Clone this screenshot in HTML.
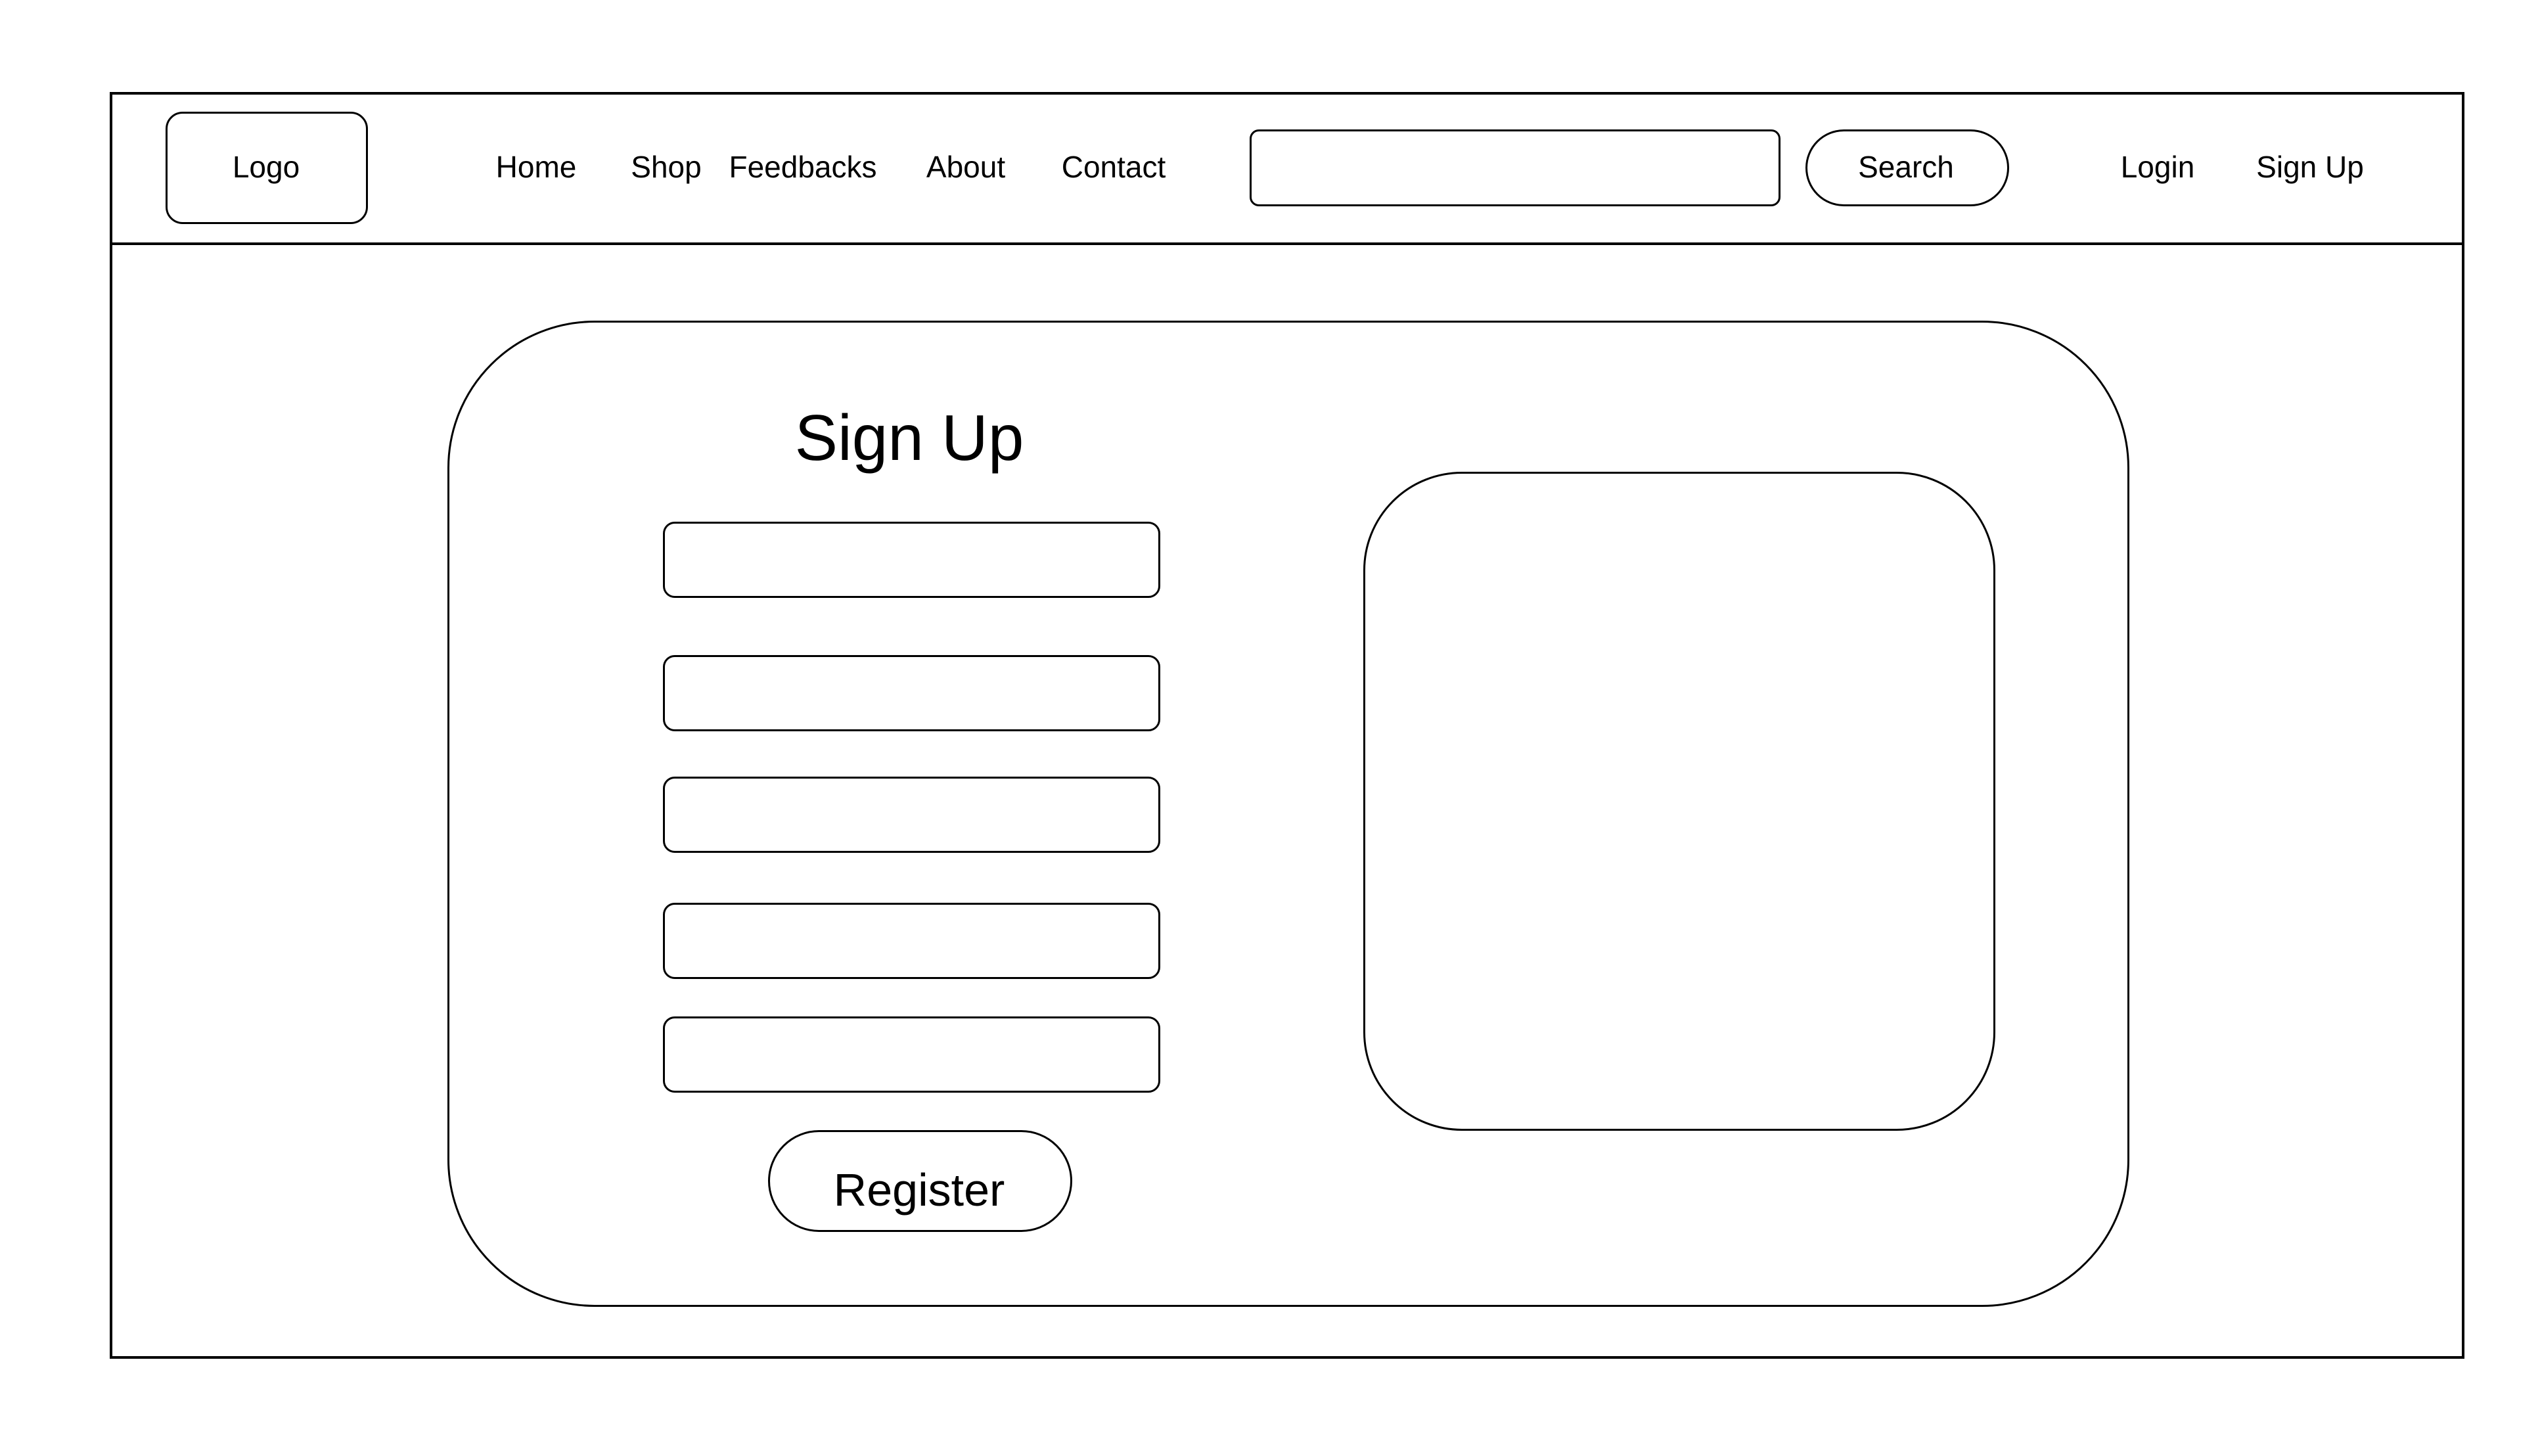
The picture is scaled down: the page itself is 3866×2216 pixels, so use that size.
<!DOCTYPE html>
<html><head><meta charset="utf-8"><style>
html,body{margin:0;padding:0;background:#fff;}
body{width:3866px;height:2216px;position:relative;overflow:hidden;font-family:"Liberation Sans",Arial,sans-serif;color:#000;}
.b{position:absolute;box-sizing:border-box;border:3.5px solid #000;background:#fff;}
.t{position:absolute;transform:translate(-50%,-50%);white-space:nowrap;font-size:46px;line-height:1;}
</style></head><body>
<div class="b" style="left:167px;top:140px;width:3584px;height:1928px;border-width:4px"></div>
<div style="position:absolute;left:167px;top:369px;width:3584px;height:4px;background:#000"></div>
<div class="b" style="left:252px;top:170px;width:308px;height:171px;border-radius:26px"></div>
<div class="t" style="left:405px;top:254px">Logo</div>
<div class="t" style="left:816px;top:254px">Home</div>
<div class="t" style="left:1014px;top:254px">Shop</div>
<div class="t" style="left:1222px;top:254px">Feedbacks</div>
<div class="t" style="left:1470px;top:254px">About</div>
<div class="t" style="left:1695px;top:254px">Contact</div>
<div class="b" style="left:1902px;top:197px;width:808px;height:117px;border-radius:14px"></div>
<div class="b" style="left:2748px;top:197px;width:310px;height:117px;border-radius:59px"></div>
<div class="t" style="left:2901px;top:254px">Search</div>
<div class="t" style="left:3284px;top:254px">Login</div>
<div class="t" style="left:3516px;top:254px">Sign Up</div>

<div class="b" style="left:681px;top:488px;width:2560px;height:1501px;border-radius:224px"></div>
<div class="t" style="left:1384px;top:666px;font-size:98px">Sign Up</div>
<div class="b" style="left:1009px;top:794px;width:757px;height:116px;border-radius:18px"></div>
<div class="b" style="left:1009px;top:997px;width:757px;height:116px;border-radius:18px"></div>
<div class="b" style="left:1009px;top:1182px;width:757px;height:116px;border-radius:18px"></div>
<div class="b" style="left:1009px;top:1374px;width:757px;height:116px;border-radius:18px"></div>
<div class="b" style="left:1009px;top:1547px;width:757px;height:116px;border-radius:18px"></div>
<div class="b" style="left:1169px;top:1720px;width:463px;height:155px;border-radius:78px"></div>
<div class="t" style="left:1399px;top:1811px;font-size:70px">Register</div>
<div class="b" style="left:2075px;top:718px;width:962px;height:1003px;border-radius:150px"></div>
</body></html>
